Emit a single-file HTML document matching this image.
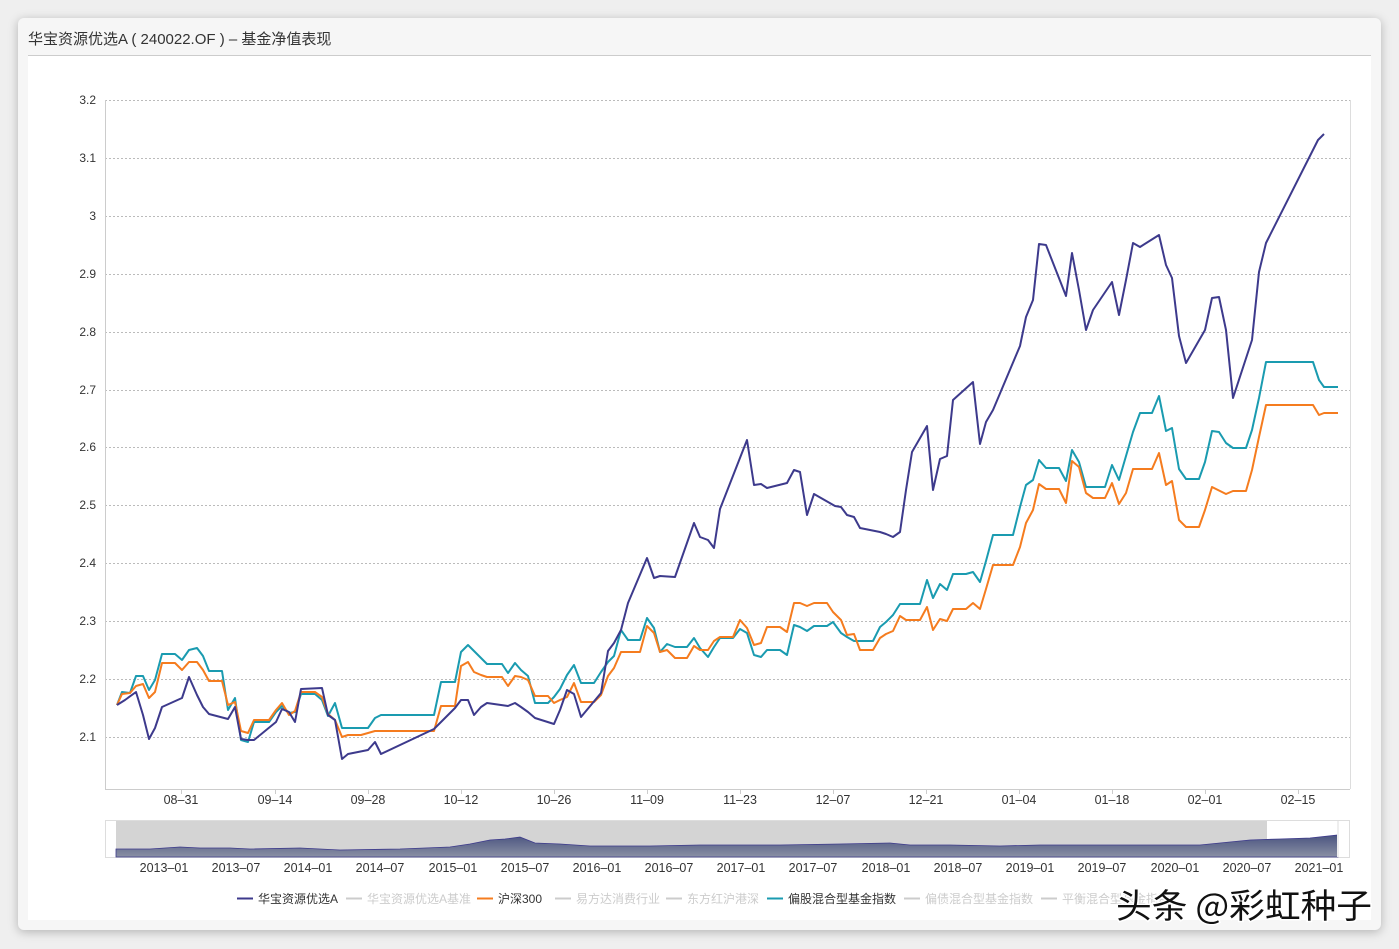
<!DOCTYPE html>
<html><head><meta charset="utf-8"><style>
html,body{margin:0;padding:0;width:1399px;height:949px;background:#efefef;overflow:hidden;font-family:"Liberation Sans","Noto Sans CJK SC",sans-serif;}
.card{position:absolute;left:18px;top:18px;width:1363px;height:912px;background:#f6f6f6;border-radius:6px;box-shadow:0 2px 10px rgba(0,0,0,.25);}
.inner{position:absolute;left:10px;top:38px;width:1343px;height:864px;background:#fff;}
.title{position:absolute;left:10px;top:10px;font-size:15px;color:#333;}
.hr{position:absolute;left:10px;top:37px;width:1343px;height:1px;background:#ccc;}
svg{position:absolute;left:0;top:0;}
</style></head><body>
<div class="card"><div class="inner"></div><div class="title">华宝资源优选A ( 240022.OF ) – 基金净值表现</div><div class="hr"></div></div>
<svg width="1399" height="949" font-family="Liberation Sans, Noto Sans CJK SC, sans-serif">
<g stroke="#bbb" stroke-dasharray="2,2" stroke-width="1">
<line x1="105" x2="1350" y1="100.5" y2="100.5"/><line x1="105" x2="1350" y1="158.5" y2="158.5"/><line x1="105" x2="1350" y1="216.5" y2="216.5"/><line x1="105" x2="1350" y1="274.5" y2="274.5"/><line x1="105" x2="1350" y1="332.5" y2="332.5"/><line x1="105" x2="1350" y1="390.5" y2="390.5"/><line x1="105" x2="1350" y1="447.5" y2="447.5"/><line x1="105" x2="1350" y1="505.5" y2="505.5"/><line x1="105" x2="1350" y1="563.5" y2="563.5"/><line x1="105" x2="1350" y1="621.5" y2="621.5"/><line x1="105" x2="1350" y1="679.5" y2="679.5"/><line x1="105" x2="1350" y1="737.5" y2="737.5"/>
</g>
<line x1="1350.5" x2="1350.5" y1="100" y2="789" stroke="#ddd"/>
<line x1="105.5" x2="105.5" y1="100" y2="789" stroke="#ccc"/>
<line x1="105" x2="1350" y1="789.5" y2="789.5" stroke="#ccc"/>
<g font-size="12" fill="#333" text-anchor="end">
<text x="96" y="104">3.2</text><text x="96" y="162">3.1</text><text x="96" y="220">3</text><text x="96" y="278">2.9</text><text x="96" y="336">2.8</text><text x="96" y="394">2.7</text><text x="96" y="451">2.6</text><text x="96" y="509">2.5</text><text x="96" y="567">2.4</text><text x="96" y="625">2.3</text><text x="96" y="683">2.2</text><text x="96" y="741">2.1</text>
</g>
<g font-size="12.5" fill="#333" text-anchor="middle">
<text x="181" y="804">08–31</text><text x="275" y="804">09–14</text><text x="368" y="804">09–28</text><text x="461" y="804">10–12</text><text x="554" y="804">10–26</text><text x="647" y="804">11–09</text><text x="740" y="804">11–23</text><text x="833" y="804">12–07</text><text x="926" y="804">12–21</text><text x="1019" y="804">01–04</text><text x="1112" y="804">01–18</text><text x="1205" y="804">02–01</text><text x="1298" y="804">02–15</text>
</g>
<g stroke="#ccc"><line x1="181.5" x2="181.5" y1="789" y2="794"/><line x1="275.5" x2="275.5" y1="789" y2="794"/><line x1="368.5" x2="368.5" y1="789" y2="794"/><line x1="461.5" x2="461.5" y1="789" y2="794"/><line x1="554.5" x2="554.5" y1="789" y2="794"/><line x1="647.5" x2="647.5" y1="789" y2="794"/><line x1="740.5" x2="740.5" y1="789" y2="794"/><line x1="833.5" x2="833.5" y1="789" y2="794"/><line x1="926.5" x2="926.5" y1="789" y2="794"/><line x1="1019.5" x2="1019.5" y1="789" y2="794"/><line x1="1112.5" x2="1112.5" y1="789" y2="794"/><line x1="1205.5" x2="1205.5" y1="789" y2="794"/><line x1="1298.5" x2="1298.5" y1="789" y2="794"/></g>
<g fill="none" stroke-width="2" stroke-linejoin="round">
<polyline stroke="#1a9bb0" points="117,705 122,692 130,693 136,676 143,676 149,690 155,680 162,654 175,654 182,660 189,650 197,648 203,656 209,671 222,671 228,710 235,698 241,740 248,742 254,722 269,722 276,712 282,706 289,713 295,712 301,694 315,694 322,700 328,716 335,703 342,728 348,728 368,728 375,718 381,715 434,715 441,682 455,682 461,652 468,645 474,651 481,658 487,664 502,664 508,673 515,663 521,670 528,676 535,703 548,703 554,697 560,689 567,675 574,665 581,683 594,683 601,672 608,662 614,656 621,630 628,640 640,640 647,618 654,628 660,652 667,644 675,647 687,647 694,638 700,648 708,657 714,647 720,638 733,638 740,629 747,633 754,655 761,657 767,650 780,650 787,655 794,625 800,627 807,631 814,626 827,626 833,622 841,633 847,637 854,641 860,641 873,641 880,627 886,622 893,615 900,604 920,604 927,580 933,598 940,584 947,590 953,574 966,574 973,572 980,582 986,561 993,535 1013,535 1020,507 1026,485 1033,480 1039,460 1046,468 1059,468 1066,481 1072,450 1079,462 1086,487 1105,487 1112,465 1119,480 1126,456 1133,432 1140,413 1152,413 1159,396 1166,431 1172,428 1179,469 1186,479 1199,479 1205,462 1212,431 1219,432 1226,443 1233,448 1246,448 1252,430 1259,398 1266,362 1313,362 1319,380 1324,387 1338,387"/>
<polyline stroke="#f57c1f" points="117,705 122,694 130,693 136,686 143,684 149,698 155,692 162,663 175,663 182,670 189,662 197,662 203,670 209,681 222,681 228,705 235,702 241,731 248,733 254,720 269,720 276,710 282,703 289,715 295,711 301,692 315,692 322,697 328,714 335,720 342,737 348,735 361,735 368,733 375,731 434,731 441,706 455,706 461,666 468,662 474,672 481,675 487,677 502,677 508,686 515,676 521,677 528,680 535,696 548,696 554,703 560,700 567,697 574,683 581,702 594,702 601,695 608,676 614,668 621,652 640,652 647,626 654,633 660,652 667,650 675,658 687,658 694,646 700,650 708,650 714,641 720,637 733,637 740,620 747,628 754,645 761,643 767,627 780,627 787,632 794,603 800,603 807,606 814,603 827,603 833,612 841,620 847,635 854,634 860,650 873,650 880,638 886,634 893,631 900,616 906,620 920,620 927,607 933,630 940,619 947,621 953,609 966,609 973,603 980,609 986,589 993,565 1013,565 1020,547 1026,523 1033,510 1039,484 1046,489 1059,489 1066,503 1072,461 1079,467 1086,493 1093,498 1105,498 1112,483 1119,504 1126,493 1133,469 1152,469 1159,453 1166,485 1172,481 1179,520 1186,527 1199,527 1205,510 1212,487 1226,494 1233,491 1246,491 1252,470 1259,437 1266,405 1313,405 1319,415 1324,413 1338,413"/>
<polyline stroke="#3d3a8c" points="117,705 125,700 136,692 143,715 149,739 155,728 162,707 182,698 189,677 197,695 203,707 209,714 228,719 235,707 241,739 248,740 254,740 276,722 282,709 289,712 295,722 301,689 322,688 328,715 335,720 342,759 348,754 368,750 375,742 381,754 434,729 441,722 447,716 455,708 461,700 468,700 474,715 481,707 487,703 508,706 515,703 521,707 528,712 535,718 554,724 560,710 567,690 574,694 581,717 601,693 608,651 614,643 621,630 628,603 647,558 654,578 660,576 675,577 694,523 700,537 708,540 714,548 720,509 747,440 754,485 761,484 767,488 787,483 794,470 800,472 807,515 814,494 835,506 841,507 847,515 854,517 860,528 880,532 886,534 893,537 900,532 906,490 912,452 927,426 933,490 940,459 947,456 953,400 973,382 980,444 986,422 993,410 1020,346 1026,317 1033,300 1039,244 1046,245 1066,296 1072,253 1079,290 1086,330 1093,310 1112,282 1119,315 1126,280 1133,243 1140,247 1159,235 1166,265 1172,278 1179,336 1186,363 1205,330 1212,298 1219,297 1226,330 1233,398 1252,340 1259,272 1266,243 1318,140 1324,134"/>
</g>
<rect x="105.5" y="820.5" width="1244" height="37" fill="#fff" stroke="#ddd"/>
<rect x="116" y="821" width="1151" height="36" fill="#d4d4d4"/>
<defs><linearGradient id="g" x1="0" y1="0" x2="0" y2="1"><stop offset="0" stop-color="#4a5480"/><stop offset="1" stop-color="#8a90a4"/></linearGradient></defs>
<path d="M116,849 L150,849 L180,847 L200,848 L230,848 L250,849 L300,848 L340,850 L400,849 L450,847 L470,844 L490,840 L505,839 L520,837 L535,843 L560,844 L590,846 L650,846 L700,845 L780,845 L840,844 L890,843 L910,845 L950,845 L1000,846 L1040,845 L1100,845 L1160,845 L1200,845 L1250,840 L1280,839 L1310,838 L1338,835 L1338,857 L116,857 Z" fill="url(#g)" stroke="#3d3a8c" stroke-width="0.8"/>
<rect x="1337" y="821" width="2" height="36" fill="#eee"/>
<g font-size="12.5" fill="#333" text-anchor="middle">
<text x="164" y="872">2013–01</text><text x="236" y="872">2013–07</text><text x="308" y="872">2014–01</text><text x="380" y="872">2014–07</text><text x="453" y="872">2015–01</text><text x="525" y="872">2015–07</text><text x="597" y="872">2016–01</text><text x="669" y="872">2016–07</text><text x="741" y="872">2017–01</text><text x="813" y="872">2017–07</text><text x="886" y="872">2018–01</text><text x="958" y="872">2018–07</text><text x="1030" y="872">2019–01</text><text x="1102" y="872">2019–07</text><text x="1175" y="872">2020–01</text><text x="1247" y="872">2020–07</text><text x="1319" y="872">2021–01</text>
</g>
<g font-size="12">
<line x1="237" x2="253" y1="898.5" y2="898.5" stroke="#3d3a8c" stroke-width="2"/><text x="258" y="903" fill="#333">华宝资源优选A</text>
<line x1="346" x2="362" y1="898.5" y2="898.5" stroke="#ccc" stroke-width="2"/><text x="367" y="903" fill="#ccc">华宝资源优选A基准</text>
<line x1="477" x2="493" y1="898.5" y2="898.5" stroke="#f57c1f" stroke-width="2"/><text x="498" y="903" fill="#333">沪深300</text>
<line x1="555" x2="571" y1="898.5" y2="898.5" stroke="#ccc" stroke-width="2"/><text x="576" y="903" fill="#ccc">易方达消费行业</text>
<line x1="666" x2="682" y1="898.5" y2="898.5" stroke="#ccc" stroke-width="2"/><text x="687" y="903" fill="#ccc">东方红沪港深</text>
<line x1="767" x2="783" y1="898.5" y2="898.5" stroke="#1a9bb0" stroke-width="2"/><text x="788" y="903" fill="#333">偏股混合型基金指数</text>
<line x1="904" x2="920" y1="898.5" y2="898.5" stroke="#ccc" stroke-width="2"/><text x="925" y="903" fill="#ccc">偏债混合型基金指数</text>
<line x1="1041" x2="1057" y1="898.5" y2="898.5" stroke="#ccc" stroke-width="2"/><text x="1062" y="903" fill="#ccc">平衡混合型基金指数</text>
</g>
<text x="1116" y="918" font-size="34" textLength="256" lengthAdjust="spacingAndGlyphs" fill="#111" stroke="#fff" stroke-width="3" paint-order="stroke" font-family="Noto Sans CJK SC, sans-serif">头条 @彩虹种子</text>
</svg>
</body></html>
